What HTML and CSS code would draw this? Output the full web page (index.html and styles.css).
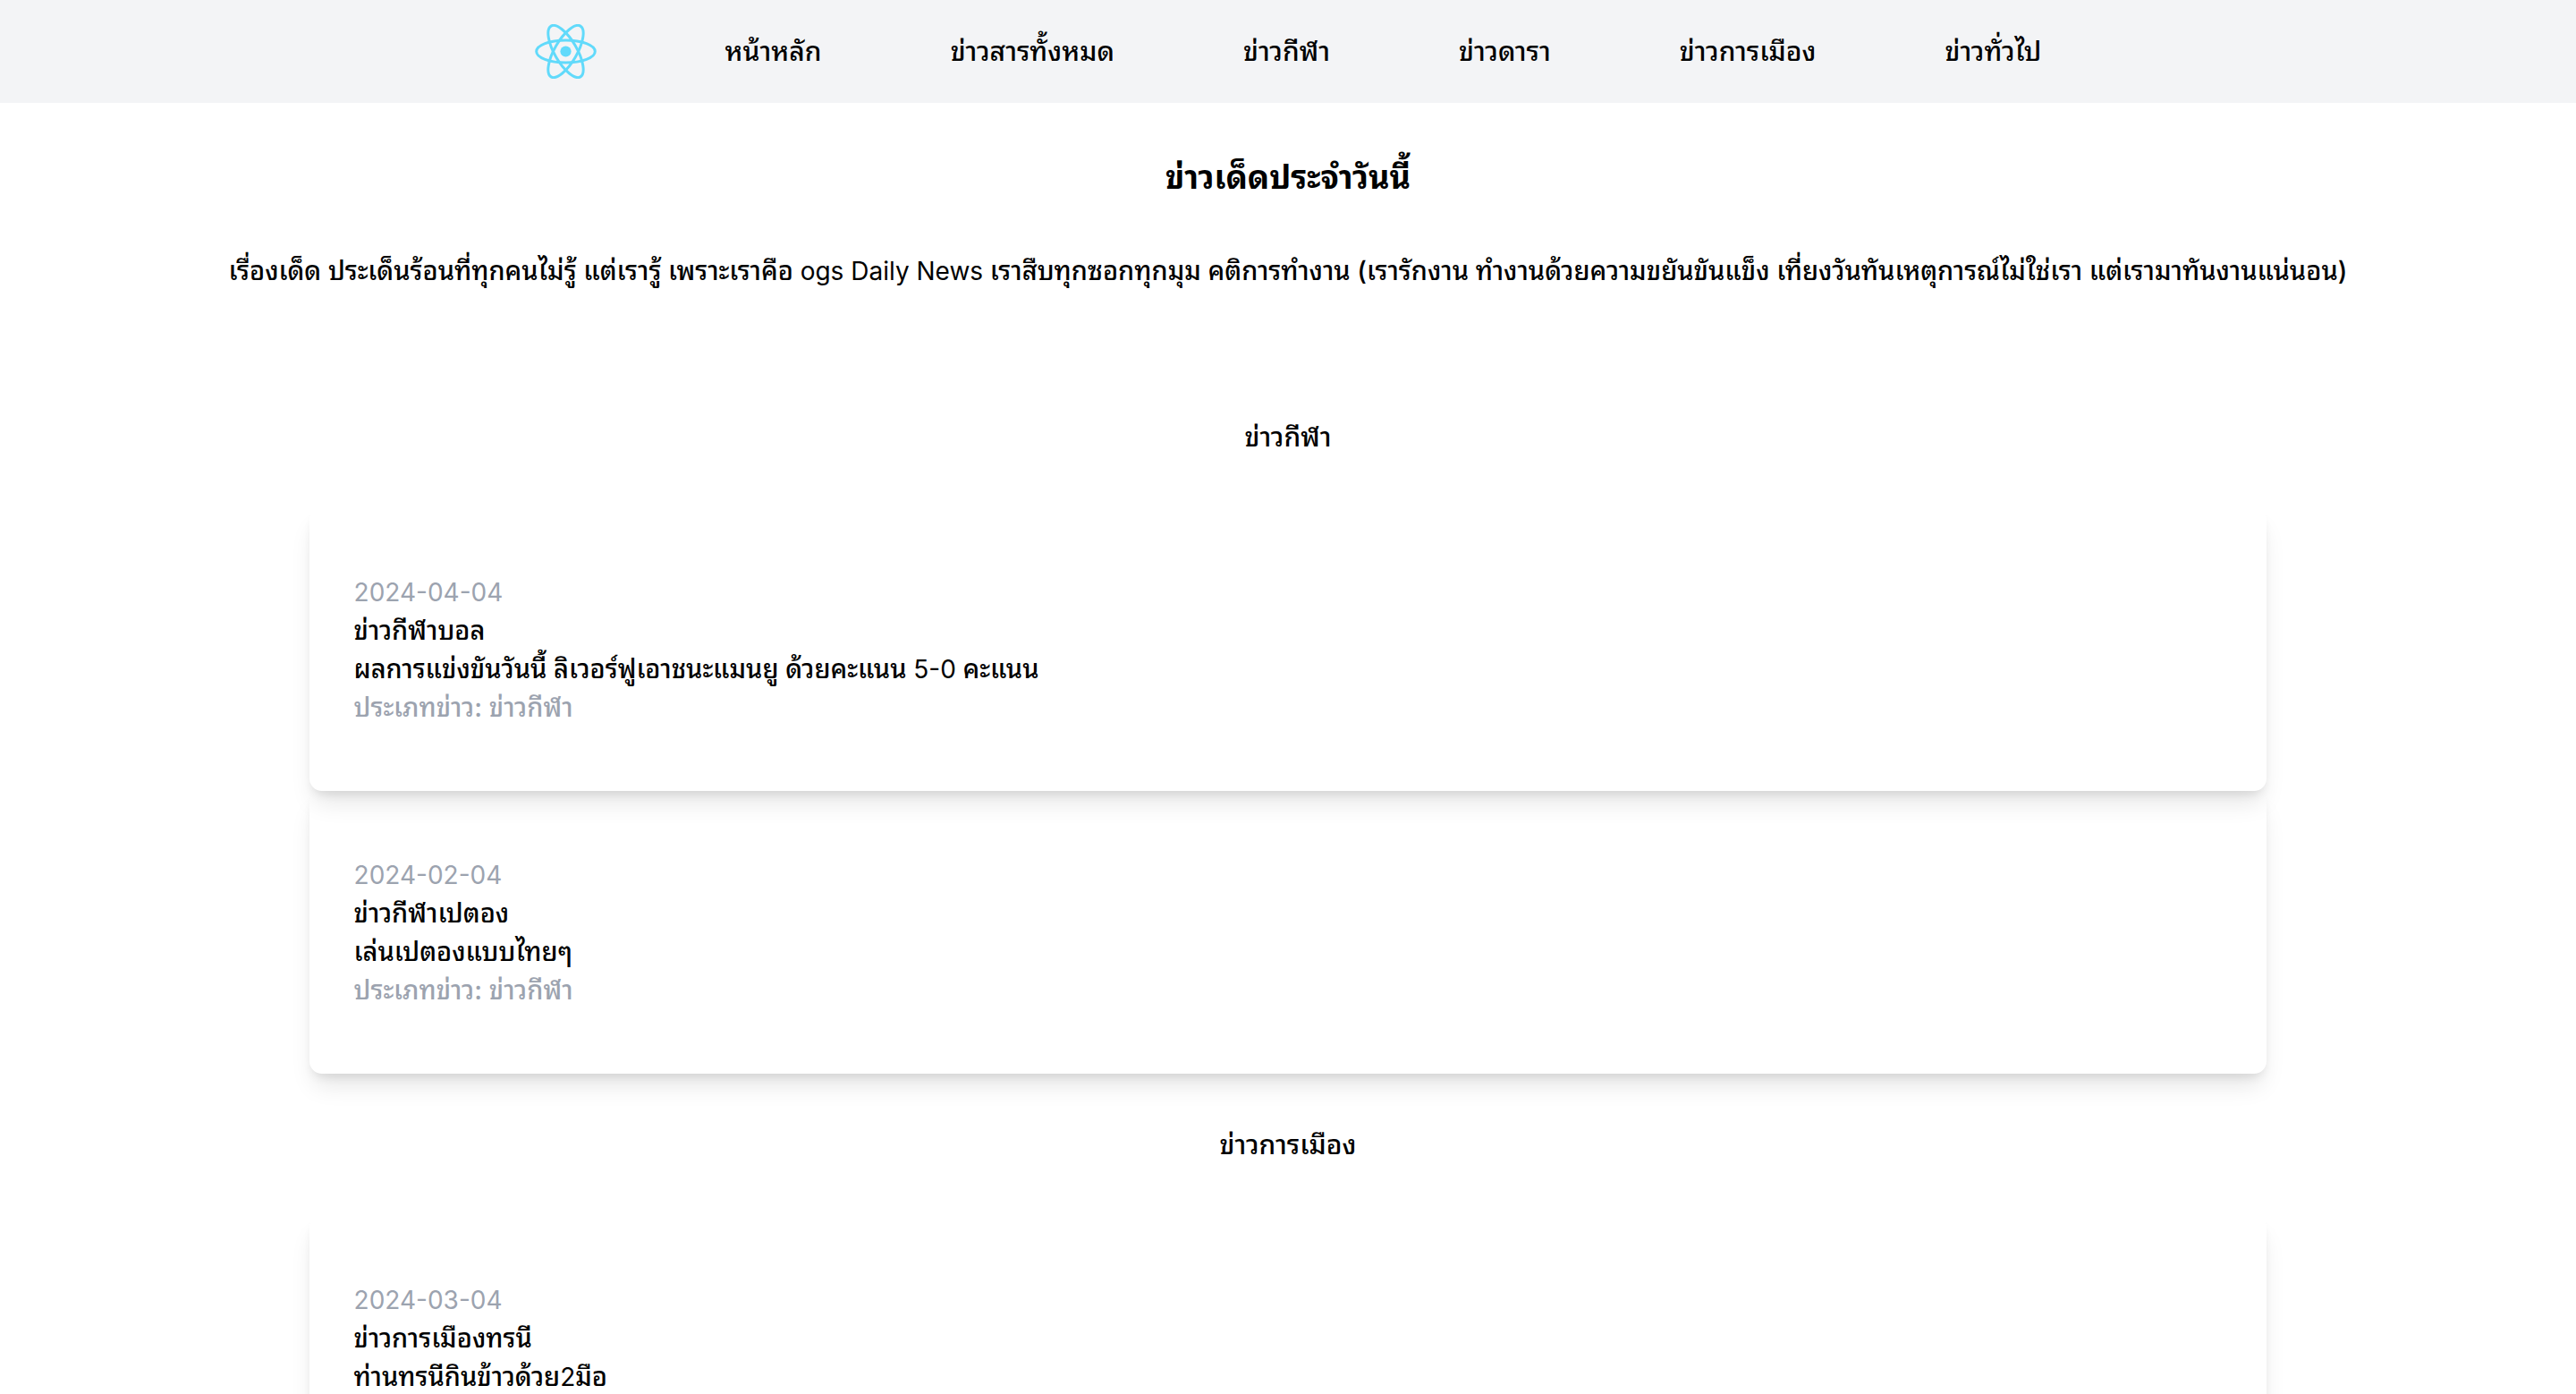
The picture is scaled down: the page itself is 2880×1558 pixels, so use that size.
FILE: index.html
```html
<!DOCTYPE html>
<html lang="th">
<head>
<meta charset="utf-8">
<title>ogs Daily News</title>
<link rel="stylesheet" href="styles.css">
</head>
<body>
<header class="site-header">
  <nav class="nav">
    <a class="logo" href="#" aria-label="React"><svg viewBox="-11.5 -10.232 23 20.463" width="69" height="61"><circle r="2.05" fill="#61dafb"/><g fill="none" stroke="#61dafb"><ellipse rx="11" ry="4.2"/><ellipse rx="11" ry="4.2" transform="rotate(60)"/><ellipse rx="11" ry="4.2" transform="rotate(120)"/></g></svg></a>
    <a href="#">หน้าหลัก</a>
    <a href="#">ข่าวสารทั้งหมด</a>
    <a href="#">ข่าวกีฬา</a>
    <a href="#">ข่าวดารา</a>
    <a href="#">ข่าวการเมือง</a>
    <a href="#">ข่าวทั่วไป</a>
  </nav>
</header>
<main class="page">
  <h1 class="title">ข่าวเด็ดประจำวันนี้</h1>
  <p class="intro">เรื่องเด็ด ประเด็นร้อนที่ทุกคนไม่รู้ แต่เรารู้ เพราะเราคือ <span class="latin" lang="en">ogs Daily News</span> เราสืบทุกซอกทุกมุม คติการทำงาน (เรารักงาน ทำงานด้วยความขยันขันแข็ง เที่ยงวันทันเหตุการณ์ไม่ใช่เรา แต่เรามาทันงานแน่นอน)</p>
  <section class="category">
    <h2 class="category-title">ข่าวกีฬา</h2>
    <article class="card">
      <p class="muted"><time class="latin">2024-04-04</time></p>
      <h3 class="headline">ข่าวกีฬาบอล</h3>
      <p>ผลการแข่งขันวันนี้ ลิเวอร์ฟูเอาชนะแมนยู ด้วยคะแนน <span class="latin">5-0</span> คะแนน</p>
      <p class="muted">ประเภทข่าว: ข่าวกีฬา</p>
    </article>
    <article class="card">
      <p class="muted"><time class="latin">2024-02-04</time></p>
      <h3 class="headline">ข่าวกีฬาเปตอง</h3>
      <p>เล่นเปตองแบบไทยๆ</p>
      <p class="muted">ประเภทข่าว: ข่าวกีฬา</p>
    </article>
  </section>
  <section class="category">
    <h2 class="category-title">ข่าวการเมือง</h2>
    <article class="card">
      <p class="muted"><time class="latin">2024-03-04</time></p>
      <h3 class="headline">ข่าวการเมืองทรนี</h3>
      <p>ท่านทรนีกินข้าวด้วย<span class="latin">2</span>มือ</p>
    </article>
  </section>
</main>
</body>
</html>
```
FILE: styles.css
```css
* { box-sizing: border-box; margin: 0; }
body { font: 500 29px/43px Inter, Thonburi, "Noto Sans Thai Looped", "Noto Looped Thai", Loma, Garuda, Waree, "Noto Sans Thai", sans-serif; color: #000; background: #fff; }
html { overflow: hidden; }
.site-header { background: #f3f4f6; }
.nav { display: flex; justify-content: center; align-items: center; gap: 144px; height: 115px; font-size: 30px; }
.nav a { color: inherit; text-decoration: none; }
.logo svg { display: block; }
.title { padding-top: 58px; text-align: center; font-size: 36px; line-height: 50px; font-weight: 700; }
.intro { margin: 58px 0 85px; text-align: center; }
.category-title { padding: 58px 0; text-align: center; font-size: 30px; font-weight: 500; }
.card { margin: 0 12%; padding: 72px 50px; border-radius: 14px; box-shadow: 0 18px 27px -5px #0000001a, 0 7px 11px -4px #0000001a; }
.headline { font-size: inherit; font-weight: 500; }
.muted { color: #9ca3af; }
.latin { font-size: 28px; font-weight: 400; line-height: 1; }
```
